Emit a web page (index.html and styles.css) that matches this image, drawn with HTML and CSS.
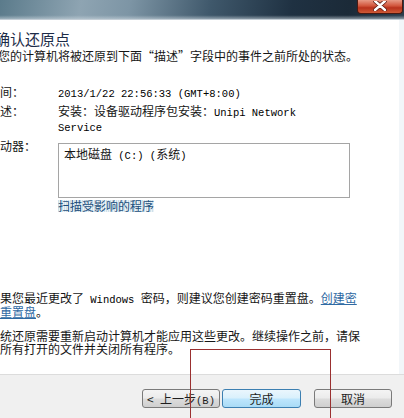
FILE: index.html
```html
<!DOCTYPE html>
<html lang="zh-CN">
<head>
<meta charset="utf-8">
<title>确认还原点</title>
<link rel="stylesheet" href="styles.css">
</head>
<body>
<div class="titlebar">
  <div class="close">
    <svg width="14" height="10" viewBox="0 0 14 10"><path d="M2 0 L12 9 M12 0 L2 9" stroke="#5a1a10" stroke-width="4" stroke-linecap="round"/><path d="M2 0 L12 9 M12 0 L2 9" stroke="#ffffff" stroke-width="2.4" stroke-linecap="round"/></svg>
  </div>
</div>
<div class="content">
  <div class="inner">
    <div class="head">
      <h1 class="title">确认还原点</h1>
      <p class="sub">您的计算机将被还原到下面<span class="fw">“描述”</span>字段中的事件之前所处的状态。</p>
    </div>
    <div class="details">
      <div class="label">时间：</div>
      <div class="value"><span class="en">2013/1/22 22:56:33 (GMT+8:00)</span></div>
      <div class="label">描述：</div>
      <div class="value desc">安装：设备驱动程序包安装：<span class="en">Unipi Network Service</span></div>
      <div class="label drive">驱动器：</div>
      <div class="value drive">
        <div class="box">本地磁盘<span class="en"> (C:) (</span>系统<span class="en">)</span></div>
        <a class="scan">扫描受影响的程序</a>
      </div>
    </div>
    <p class="note first">如果您最近更改了<span class="en win"> Windows </span>密码，则建议您创建密码重置盘。<a class="link">创建密码重置盘</a>。</p>
    <p class="note">系统还原需要重新启动计算机才能应用这些更改。继续操作之前，请保存所有打开的文件并关闭所有程序。</p>
  </div>
</div>
<div class="footer">
  <button class="btn back">&lt;<span class="en"> </span>上一步<span class="en">(B)</span></button>
  <button class="btn finish">完成</button>
  <button class="btn cancel">取消</button>
</div>
<div class="mark"></div>
</body>
</html>
```
FILE: styles.css
```css
html, body {
  margin: 0;
  padding: 0;
}
body {
  width: 404px;
  height: 418px;
  overflow: hidden;
  position: relative;
  display: flex;
  flex-direction: column;
  background: #ffffff;
  font-family: "Noto Sans CJK SC", "Noto Sans", sans-serif;
  font-size: 12px;
  color: #161616;
  text-autospace: no-autospace;
}
.titlebar {
  height: 20px;
  flex: none;
  display: flex;
  justify-content: flex-end;
  align-items: flex-start;
  background:
    linear-gradient(180deg, rgba(255,255,255,0) 0%, rgba(255,255,255,0) 80%, rgba(200,212,220,0.6) 100%),
    linear-gradient(100deg, #5b7b8b 0%, #8ea4b2 20%, #7d95a5 32%, #3f586b 52%, #1f3142 72%, #1b2a38 86%, #2c3d4c 100%);
  border-bottom: 1px solid #c4ced6;
  box-sizing: border-box;
}
.close {
  width: 46px;
  height: 14px;
  margin-right: 1px;
  box-sizing: border-box;
  border: 1px solid #4a1a12;
  border-top: none;
  border-radius: 0 0 4px 4px;
  background: linear-gradient(180deg, #e79a86 0%, #d2563c 45%, #b8321c 60%, #cf5a36 100%);
  display: flex;
  justify-content: center;
  align-items: flex-start;
  padding-top: 1px;
}
.content {
  flex: 1;
  box-shadow: inset -5px 0 0 #f2f6f9;
}
.inner {
  margin-left: -12px;
}
.head {
  padding-top: 9px;
}
.title {
  margin: 0 0 0 7px;
  font-size: 15px;
  font-weight: normal;
  line-height: 20px;
  color: #1c2b48;
}
.sub {
  margin: 0 0 0 10px;
  line-height: 14px;
}
.fw {
  font-feature-settings: "fwid" 1;
}
.en {
  font-family: "Liberation Mono", monospace;
  font-size: 10.5px;
  line-height: 1;
  white-space: pre;
  color: #000000;
}
.details {
  margin-top: 21px;
  display: grid;
  grid-template-columns: 70px 292px;
  row-gap: 3px;
  line-height: 15px;
}
.desc {
  max-width: 270px;
}
.desc .en {
  white-space: normal;
}
.label.drive {
  margin-top: 1px;
}
.value.drive {
  margin-top: 4px;
}
.box {
  margin-top: 2px;
  height: 55px;
  box-sizing: border-box;
  border: 1px solid #a5a5a5;
  padding: 2px 5px;
  background: #ffffff;
}
.scan {
  display: inline-block;
  margin-top: 1px;
  line-height: 12px;
  color: #1d4f7c;
  background: repeating-linear-gradient(90deg, #cfe0ea 0 1px, #eaf2f6 1px 2px);
}
.note {
  margin: 0;
  width: 376px;
  line-height: 13px;
}
.note.first {
  margin-top: 78px;
  margin-bottom: 11px;
}
.link {
  color: #2f6aa3;
  text-decoration: underline;
}
.footer {
  height: 44px;
  flex: none;
  box-sizing: border-box;
  border-top: 1px solid #dcdcdc;
  background: #f0f0f0;
  display: flex;
  justify-content: flex-end;
  align-items: flex-start;
  padding: 14px 12px 0 0;
}
.btn {
  height: 19px;
  box-sizing: border-box;
  padding: 0;
  border: 1px solid #7a7a7a;
  border-radius: 3px;
  background: linear-gradient(180deg, #f4f4f4 0%, #ebebeb 48%, #dcdcdc 52%, #cfcfcf 100%);
  font-family: "Noto Sans CJK SC", sans-serif;
  font-size: 12px;
  line-height: 17px;
  color: #1e1e1e;
}
.btn .en {
  font-size: 10.5px;
  color: #1e1e1e;
}
.back {
  width: 78px;
  margin-right: 2px;
}
.finish {
  width: 79px;
  margin-right: 13px;
  border-color: #3c7fb1;
  background: linear-gradient(180deg, #eaf6fd 0%, #d9f0fc 48%, #bee6fd 52%, #a9dbf6 100%);
}
.cancel {
  width: 78px;
}
.mark {
  position: absolute;
  left: 190px;
  top: 349px;
  width: 139px;
  height: 80px;
  border: 1px solid #9a3030;
  border-bottom: none;
}
```
